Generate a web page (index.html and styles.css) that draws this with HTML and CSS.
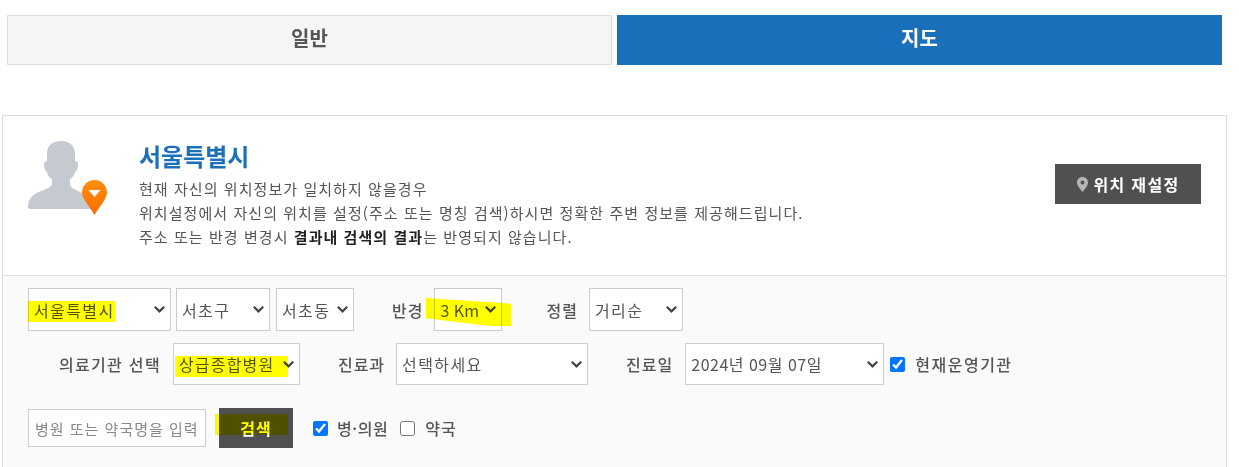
FILE: index.html
```html
<!DOCTYPE html>
<html lang="ko">
<head>
    <meta charset="UTF-8">
    <title>병원 찾기</title>
    <link rel="stylesheet" href="styles.css">
</head>
<body>
    <div class="tabs">
        <a class="tab">일반</a>
        <a class="tab active">지도</a>
    </div>

    <div class="panel">
        <div class="location">
            <svg class="avatar" width="80" height="75" viewBox="0 0 80 75">
                <defs>
                    <linearGradient id="pin-fill" x1="0" y1="0" x2="0" y2="1">
                        <stop offset="0" stop-color="#ff8f0a"/>
                        <stop offset="1" stop-color="#ff6a00"/>
                    </linearGradient>
                </defs>
                <path fill="#c5cad1" d="M33 0C24 0 19 5 19 13v7c-2 0-3 1-3 3 0 4 1 7 3 8 1 4 3 6 5 7v4c0 3-2 4-6 6C10 51 3 54 1 60c-1 3-1 5-1 6s1 2 2 2h64c0-8-6-14-18-19-4-2-6-3-6-7v-4c2-1 4-3 5-7 2-1 3-4 3-8 0-2-1-3-3-3v-7C47 5 42 0 33 0z"/>
                <path fill="url(#pin-fill)" d="M66.500 39C59.500 39 54 44.500 54 51.500 54 58 62 66 66.500 74 71 66 79 58 79 51.500 79 44.500 73.500 39 66.500 39z"/>
                <path fill="#fff" d="M60.500 49h12l-6 7z"/>
            </svg>
            <div class="location-text">
                <h2>서울특별시</h2>
                <p>현재 자신의 위치정보가 일치하지 않을경우</p>
                <p>위치설정에서 자신의 위치를 설정(주소 또는 명칭 검색)하시면 정확한 주변 정보를 제공해드립니다.</p>
                <p>주소 또는 반경 변경시 <b>결과내 검색의 결과</b>는 반영되지 않습니다.</p>
            </div>
            <button class="reset-btn">
                <svg width="11" height="15" viewBox="0 0 11 15"><path fill="#b5b5b5" fill-rule="evenodd" d="M5.500 0C2.500 0 0 2.400 0 5.400 0 9 3.500 12 5.500 15 7.500 12 11 9 11 5.400 11 2.400 8.500 0 5.500 0zm0 3.500a2 2 0 1 1 0 4 2 2 0 0 1 0-4z"/></svg>
                위치 재설정
            </button>
        </div>

        <form class="search">
            <div class="row row-one">
                <select class="sel w-city"><option>서울특별시</option></select>
                <select class="sel w-gu"><option>서초구</option></select>
                <select class="sel w-dong"><option>서초동</option></select>
                <label class="lbl lbl-radius">반경</label>
                <select class="sel w-radius"><option>3 Km</option></select>
                <label class="lbl lbl-sort">정렬</label>
                <select class="sel w-sort"><option>거리순</option></select>
            </div>
            <div class="row row-two">
                <label class="lbl lbl-org">의료기관 선택</label>
                <select class="sel w-org"><option>상급종합병원</option></select>
                <label class="lbl lbl-dept">진료과</label>
                <select class="sel w-dept"><option>선택하세요</option></select>
                <label class="lbl lbl-date">진료일</label>
                <select class="sel w-date"><option>2024년 09월 07일</option></select>
                <label class="check check-open"><input type="checkbox" checked>현재운영기관</label>
            </div>
            <div class="row row-three">
                <input class="keyword" type="text" placeholder="병원 또는 약국명을 입력">
                <button class="search-btn" type="button">검색</button>
                <label class="check check-hosp"><input type="checkbox" checked>병·의원</label>
                <label class="check check-pharm"><input type="checkbox">약국</label>
            </div>
        </form>
    </div>

    <!-- yellow marker strokes drawn over the form -->
    <span class="mark mark-city"></span>
    <span class="mark mark-radius"></span>
    <span class="mark mark-org"></span>
    <span class="mark mark-search"></span>
</body>
</html>
```

FILE: styles.css
```css
body {
    margin: 0;
    font-family: "Noto Sans CJK KR", "Noto Sans", sans-serif;
    font-size: 14px;
    color: #555;
    background: #fff;
    height: 467px;
    overflow: hidden;
    position: relative;
}
.tabs {
    display: flex;
    gap: 5px;
    padding: 15px 17px 0 7px;
}
.tab {
    flex: 1;
    height: 50px;
    line-height: 44px;
    text-align: center;
    font-size: 20px;
    font-weight: 700;
    color: #555;
    background: #f5f5f5;
    border: 1px solid #ddd;
    box-sizing: border-box;
}
.tab.active {
    color: #fff;
    background: #1b70bb;
    border-color: #1b70bb;
}
.panel {
    margin: 50px 12px 0 2px;
    border: 1px solid #ddd;
    border-bottom: 0;
}
.location {
    display: flex;
    align-items: flex-start;
    height: 159px;
    box-sizing: border-box;
    padding: 24px 25px 0 25px;
}
.avatar {
    flex: none;
    margin: 1px 31px 0 0;
}
.location-text {
    flex: 1;
}
.location-text h2 {
    margin: 0 0 5px;
    font-size: 24px;
    line-height: 32px;
    font-weight: 700;
    color: #1b70bb;
}
.location-text p {
    margin: 0;
    font-size: 15px;
    line-height: 24px;
    letter-spacing: 1.060px;
}
.location-text b {
    color: #222;
}
.reset-btn {
    display: flex;
    align-items: center;
    justify-content: center;
    gap: 6px;
    margin-top: 24px;
    width: 146px;
    height: 40px;
    border: 0;
    background: #505050;
    color: #fff;
    font: 700 16px "Noto Sans CJK KR", sans-serif;
    letter-spacing: 1.300px;
}
.search {
    background: #fafafa;
    border-top: 1px solid #ddd;
    padding: 12px 25px 0;
    height: 192px;
    box-sizing: border-box;
}
.row {
    display: flex;
    align-items: center;
}
.row-one { height: 43px; }
.row-two { height: 42px; margin-top: 12px; }
.row-three { height: 40px; margin-top: 23px; }
.sel {
    appearance: none;
    height: 100%;
    box-sizing: border-box;
    border: 1px solid #ccc;
    border-radius: 0;
    padding: 0 5px;
    color: #555;
    font: 16px "Noto Sans CJK KR", sans-serif;
    letter-spacing: 1.400px;
    background: #fff url("data:image/svg+xml,%3Csvg xmlns='http://www.w3.org/2000/svg' viewBox='0 0 16 16'%3E%3Cpath fill='none' stroke='%23444' stroke-width='2.400' d='m3 5 5 5 5-5'/%3E%3C/svg%3E") no-repeat right 3px center / 15px 15px;
}
.w-city { width: 143px; }
.w-gu { width: 94px; margin-left: 5px; }
.w-dong { width: 78px; margin-left: 6px; }
.w-radius { width: 68px; margin-left: 11px; letter-spacing: 0; }
.w-sort { width: 94px; margin-left: 11px; }
.w-org { width: 127px; margin-left: 12px; letter-spacing: 1.200px; }
.w-dept { width: 192px; margin-left: 11px; }
.w-date { width: 199px; margin-left: 12px; letter-spacing: 0.500px; }
.lbl {
    font-size: 16px;
    font-weight: 500;
    letter-spacing: 1px;
    white-space: nowrap;
}
.lbl-radius { margin-left: 38px; }
.lbl-sort { margin-left: 44px; }
.lbl-org { margin-left: 31px; letter-spacing: 1.300px; }
.lbl-dept { margin-left: 38px; }
.lbl-date { margin-left: 38px; }
.check {
    display: flex;
    align-items: center;
    font-size: 16px;
    font-weight: 500;
    letter-spacing: 1px;
    white-space: nowrap;
}
.check input {
    width: 15px;
    height: 15px;
    margin: 0 10px 0 0;
}
.check-open { margin-left: 6px; letter-spacing: 1.500px; }
.check-hosp { margin-left: 20px; letter-spacing: 0.600px; }
.check-hosp input { margin-right: 9px; }
.check-pharm { margin-left: 12px; }
.keyword {
    width: 178px;
    height: 38px;
    box-sizing: border-box;
    border: 1px solid #ccc;
    padding: 0 6px;
    background: #fff;
    font: 15px "Noto Sans CJK KR", sans-serif;
    letter-spacing: 1px;
}
.keyword::placeholder {
    color: #888;
}
.search-btn {
    width: 74px;
    height: 40px;
    margin-left: 13px;
    padding-bottom: 2px;
    border: 0;
    background: #505050;
    color: #fff;
    font: 700 16px "Noto Sans CJK KR", sans-serif;
    letter-spacing: 1px;
}
.mark {
    position: absolute;
    background: #ffff00;
    mix-blend-mode: multiply;
}
.mark-city { left: 28px; top: 301px; width: 87px; height: 21px; }
.mark-radius {
    left: 426px;
    top: 298px;
    width: 85px;
    height: 28px;
    clip-path: polygon(0 0, 100% 20%, 100% 100%, 75% 100%, 0 72%);
}
.mark-org { left: 175px; top: 356px; width: 113px; height: 21px; }
.mark-search { left: 215px; top: 414px; width: 73px; height: 21px; }
```
